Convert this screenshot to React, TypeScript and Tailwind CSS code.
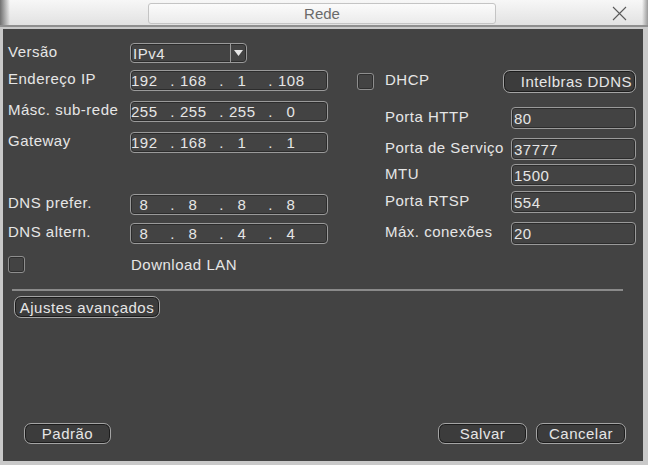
import React from 'react';

// Text field with the DVR-style rounded frame
function Field({ width, children }: { width: string; children?: React.ReactNode }) {
  return (
    <div
      className={`${width} h-full flex items-center rounded-[4px] border border-[#9a9a9a] shadow-[inset_0_0_0_1px_#2c2c2c] pl-[2px] overflow-hidden`}
    >
      {children}
    </div>
  );
}

// IP address field: four segments separated by dots
function IpField({ parts }: { parts: string[] }) {
  return (
    <Field width="w-[198px]">
      <div className="flex -ml-[2px]">
        {parts.map((p, i) => (
          <div key={i} className="flex">
            <span className="w-[26px] text-center">{p}</span>
            {i < 3 && <span className="w-[23px] text-right pr-[5px]">.</span>}
          </div>
        ))}
      </div>
    </Field>
  );
}

function Button({ width, label, align = 'center' }: { width: string; label: string; align?: 'center' | 'right' }) {
  return (
    <div
      className={`${width} h-full flex items-center ${align === 'right' ? 'justify-end pr-[3px]' : 'justify-center'} rounded-[7px] border border-[#a4a4a4] bg-[#3c3c3c] shadow-[inset_0_0_0_1px_#1c1c1c]`}
    >
      {label}
    </div>
  );
}

function Checkbox() {
  return <div className="w-[17px] h-[17px] rounded-[3px] border border-[#8e8e8e] shadow-[inset_0_0_0_1px_#2e2e2e]" />;
}

function Row({ className, label, labelWidth, children }: { className: string; label: string; labelWidth: string; children: React.ReactNode }) {
  return (
    <div className={`flex items-center ${className}`}>
      <span className={`${labelWidth} pb-[4px] whitespace-nowrap`}>{label}</span>
      {children}
    </div>
  );
}

export default function App() {
  return (
    <div
      className="w-[648px] h-[465px] bg-[#c9c9c9] flex flex-col text-[#e6e6e6] text-[15px] leading-none tracking-[0.5px] overflow-hidden"
      style={{ fontFamily: '"Liberation Sans", Arial, sans-serif' }}
    >
      {/* Title bar */}
      <div className="relative h-[27px] shrink-0 bg-gradient-to-b from-[#f7f7f7] to-[#e2e2e2] border-b-2 border-[#8f8f8f] flex items-start">
        <div className="absolute left-0 top-0 bottom-0 w-[10px] bg-gradient-to-r from-[#707070] to-transparent" />
        <div className="absolute right-0 top-0 bottom-0 w-[6px] bg-gradient-to-l from-[#9a9a9a] to-transparent" />
        <div className="ml-[148px] mt-[3px] w-[348px] h-[21px] rounded-[3px] border border-[#c4c4c4] bg-gradient-to-b from-[#fbfbfb] to-[#ebebeb] flex items-center justify-center text-[#6a6a6a] tracking-normal">
          Rede
        </div>
        <svg className="ml-[116px] mt-[6px]" width="15" height="15" viewBox="0 0 15 15">
          <path d="M1 1 L14 14 M14 1 L1 14" stroke="#5a5a5a" strokeWidth="1.1" fill="none" />
        </svg>
      </div>

      {/* Main panel */}
      <div className="ml-[3px] mt-[2px] w-[640px] h-[432px] bg-[#434343] flex flex-col pl-[5px]">
        <div className="flex">
          {/* Left column */}
          <div className="w-[320px] flex flex-col">
            <Row className="mt-[14px] h-[20px]" label="Versão" labelWidth="w-[122px]">
              <div className="w-[117px] h-full flex rounded-[4px] border border-[#9a9a9a] shadow-[inset_0_0_0_1px_#2c2c2c]">
                <span className="flex-1 pl-[2px] flex items-center">IPv4</span>
                <div className="w-[16px] border-l border-[#9a9a9a] flex items-center justify-center">
                  <svg width="9" height="6" viewBox="0 0 9 6">
                    <path d="M0 0 H9 L4.5 6 Z" fill="#e6e6e6" />
                  </svg>
                </div>
              </div>
            </Row>
            <Row className="mt-[7px] h-[21px]" label="Endereço IP" labelWidth="w-[122px]">
              <IpField parts={['192', '168', '1', '108']} />
            </Row>
            <Row className="mt-[10px] h-[21px]" label="Másc. sub-rede" labelWidth="w-[122px]">
              <IpField parts={['255', '255', '255', '0']} />
            </Row>
            <Row className="mt-[10px] h-[21px]" label="Gateway" labelWidth="w-[122px]">
              <IpField parts={['192', '168', '1', '1']} />
            </Row>
            <Row className="mt-[41px] h-[21px]" label="DNS prefer." labelWidth="w-[122px]">
              <IpField parts={['8', '8', '8', '8']} />
            </Row>
            <Row className="mt-[8px] h-[21px]" label="DNS altern." labelWidth="w-[122px]">
              <IpField parts={['8', '8', '4', '4']} />
            </Row>
            <div className="mt-[12px] h-[17px] flex items-center">
              <div className="w-[123px]">
                <Checkbox />
              </div>
              <span>Download LAN</span>
            </div>
          </div>

          {/* Right column */}
          <div className="ml-[29px] w-[279px] flex flex-col">
            <div className="mt-[41px] h-[23px] flex items-center">
              <div className="w-[28px]">
                <Checkbox />
              </div>
              <span className="flex-1 pb-[4px]">DHCP</span>
              <Button width="w-[133px]" label="Intelbras DDNS" align="right" />
            </div>
            <Row className="mt-[14px] h-[22px] pl-[28px]" label="Porta HTTP" labelWidth="w-[126px]">
              <Field width="w-[125px]">80</Field>
            </Row>
            <Row className="mt-[9px] h-[22px] pl-[28px]" label="Porta de Serviço" labelWidth="w-[126px]">
              <Field width="w-[125px]">37777</Field>
            </Row>
            <Row className="mt-[4px] h-[22px] pl-[28px]" label="MTU" labelWidth="w-[126px]">
              <Field width="w-[125px]">1500</Field>
            </Row>
            <Row className="mt-[5px] h-[22px] pl-[28px]" label="Porta RTSP" labelWidth="w-[126px]">
              <Field width="w-[125px]">554</Field>
            </Row>
            <Row className="mt-[9px] h-[23px] pl-[28px]" label="Máx. conexões" labelWidth="w-[126px]">
              <Field width="w-[125px]">20</Field>
            </Row>
          </div>
        </div>

        {/* Separator */}
        <div className="mt-[16px] ml-[4px] w-[611px] h-[2px] bg-[#8a8a8a]" />

        <div className="mt-[5px] ml-[6px] h-[22px] flex">
          <Button width="w-[146px]" label="Ajustes avançados" />
        </div>

        {/* Footer buttons */}
        <div className="mt-auto mb-[17px] h-[21px] flex pl-[16px] pr-[17px]">
          <Button width="w-[87px]" label="Padrão" />
          <div className="flex-1" />
          <Button width="w-[89px]" label="Salvar" />
          <div className="w-[9px]" />
          <Button width="w-[90px]" label="Cancelar" />
        </div>
      </div>
    </div>
  );
}
